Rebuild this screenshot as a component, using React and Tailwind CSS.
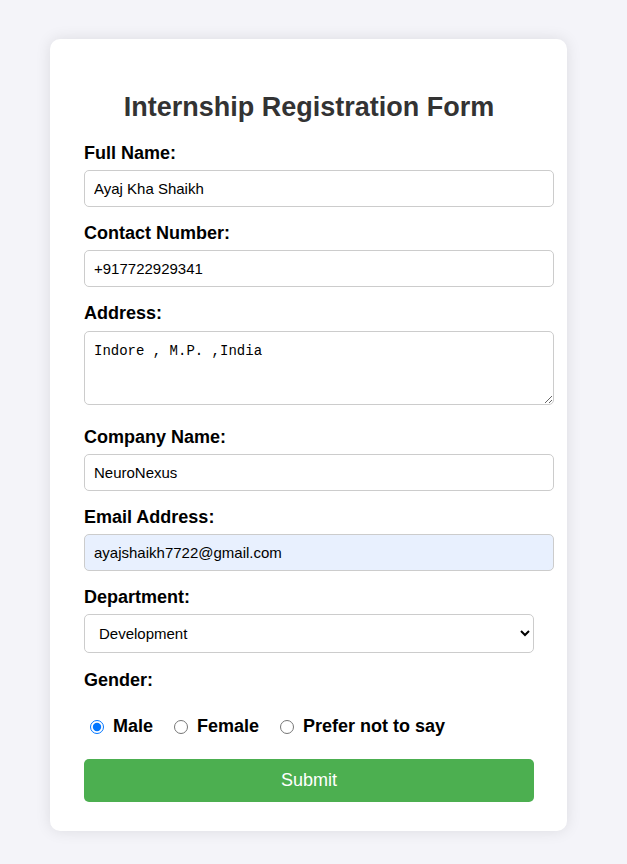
import { useState } from "react";

const fields = [
  { id: "name", label: "Full Name:", value: "Ayaj Kha Shaikh" },
  { id: "contact", label: "Contact Number:", value: "+917722929341" },
];

const fields2 = [
  { id: "company", label: "Company Name:", value: "NeuroNexus" },
  { id: "email", label: "Email Address:", value: "ayajshaikh7722@gmail.com", autofill: true },
];

const Label = ({ htmlFor, children, gap = "mb-[6px]" }) => (
  <label htmlFor={htmlFor} className={`block text-[18px] leading-[21px] font-bold text-black ${gap}`}>
    {children}
  </label>
);

const Field = ({ id, label, value, autofill }) => (
  <div className="mb-[16px]">
    <Label htmlFor={id}>{label}</Label>
    <input
      id={id}
      defaultValue={value}
      className={`block w-[470px] h-[37px] pl-[9px] pr-[10px] text-[15px] text-black border border-[#ccc] rounded-[5px] outline-none ${
        autofill ? "bg-[#e8f0fe]" : "bg-white"
      }`}
    />
  </div>
);

export default function App() {
  const [gender, setGender] = useState("male");

  return (
    <div className="min-h-screen bg-[#f4f4f9] pt-[39px] pb-[33px] font-['Liberation_Sans',Arial,sans-serif]">
      <div className="ml-[50px] w-[517px] bg-white rounded-[10px] shadow-[0_0_15px_rgba(0,0,0,0.1)] pt-[53px] pb-[29px] pl-[34px] pr-[33px]">
        <h2 className="text-center text-[27px] leading-[31px] font-bold text-[#333] mb-[20px]">
          Internship Registration Form
        </h2>

        <form onSubmit={(e) => e.preventDefault()}>
          {fields.map((f) => (
            <Field key={f.id} {...f} />
          ))}

          {/* Address */}
          <div className="mb-[22px]">
            <Label htmlFor="address" gap="mb-[7px]">
              Address:
            </Label>
            <textarea
              id="address"
              defaultValue="Indore , M.P. ,India"
              className="block w-[470px] h-[74px] pl-[9px] pr-[10px] pt-[11px] pb-[10px] text-[14px] leading-[17px] text-black font-['Liberation_Mono',monospace] border border-[#ccc] rounded-[5px] bg-white outline-none"
            />
          </div>

          {fields2.map((f) => (
            <Field key={f.id} {...f} />
          ))}

          {/* Department */}
          <div className="mb-[17px]">
            <Label htmlFor="department">Department:</Label>
            <select
              id="department"
              defaultValue="Development"
              className="block w-[450px] h-[39px] pl-[10px] pr-[12px] text-[15px] text-black border border-[#ccc] rounded-[5px] bg-white outline-none"
            >
              <option>Development</option>
              <option>Design</option>
              <option>Marketing</option>
            </select>
          </div>

          {/* Gender */}
          <div className="text-[18px] leading-[21px] font-bold text-black">Gender:</div>
          <div className="flex items-center gap-[15px] mt-[25px] mb-[22px] text-[18px] leading-[21px] font-bold text-black">
            {[
              ["male", "Male"],
              ["female", "Female"],
              ["none", "Prefer not to say"],
            ].map(([val, text]) => (
              <label key={val} className="flex items-center gap-[9px]">
                <input
                  type="radio"
                  name="gender"
                  value={val}
                  checked={gender === val}
                  onChange={() => setGender(val)}
                  className="m-0 ml-[6px] w-[14px] h-[14px]"
                />
                {text}
              </label>
            ))}
          </div>

          <button
            type="submit"
            className="block w-[450px] h-[43px] bg-[#4caf50] text-white text-[18px] rounded-[5px]"
          >
            Submit
          </button>
        </form>
      </div>
    </div>
  );
}
